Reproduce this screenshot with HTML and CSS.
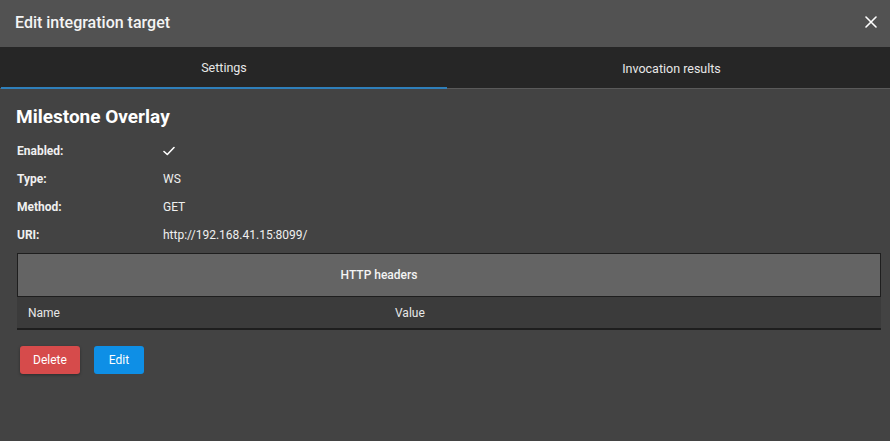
FILE: index.html
```html
<!DOCTYPE html>
<html lang="en">
<head>
    <meta charset="UTF-8">
    <meta name="viewport" content="width=device-width, initial-scale=1.0">
    <title>Edit integration target</title>
    <link rel="stylesheet" href="styles.css">
</head>
<body>
    <div class="dialog">
        <!-- Title bar -->
        <div class="dialog-header">
            <h2>Edit integration target</h2>
            <button class="close-btn" aria-label="Close">
                <svg width="12" height="12" viewBox="0 0 12 12">
                    <path d="M1 1 L11 11 M11 1 L1 11" stroke="#fff" stroke-width="1.6" stroke-linecap="round"/>
                </svg>
            </button>
        </div>

        <!-- Tabs -->
        <div class="tabs">
            <div class="tab active">Settings</div>
            <div class="tab">Invocation results</div>
        </div>

        <div class="dialog-body">
            <h3>Milestone Overlay</h3>

            <div class="props">
                <div class="prop-label">Enabled:</div>
                <div class="prop-value">
                    <svg width="12" height="10" viewBox="0 0 12 10">
                        <path d="M1 5.5 L4.3 8.5 L11 1.5" fill="none" stroke="#fff" stroke-width="1.6" stroke-linecap="round" stroke-linejoin="round"/>
                    </svg>
                </div>
                <div class="prop-label">Type:</div>
                <div class="prop-value">WS</div>
                <div class="prop-label">Method:</div>
                <div class="prop-value">GET</div>
                <div class="prop-label">URI:</div>
                <div class="prop-value">http://192.168.41.15:8099/</div>
            </div>

            <!-- Headers table -->
            <div class="headers-table">
                <div class="headers-title">HTTP headers</div>
                <div class="headers-cols">
                    <div class="col">Name</div>
                    <div class="col">Value</div>
                </div>
            </div>

            <div class="actions">
                <button class="btn btn-danger">Delete</button>
                <button class="btn btn-primary">Edit</button>
            </div>
        </div>
    </div>
</body>
</html>
```

FILE: styles.css
```css
/* Page reset */
body {
    margin: 0;
    padding: 0;
    background-color: #434343;
    font-family: 'Roboto', 'Liberation Sans', sans-serif;
    color: #ffffff;
}

.dialog {
    width: 890px;
    height: 441px;
    display: flex;
    flex-direction: column;
    background-color: #434343;
    overflow: hidden;
}

/* Header */
.dialog-header {
    height: 47px;
    background-color: #525252;
    display: flex;
    align-items: center;
    justify-content: space-between;
    padding: 0 12px 0 15px;
    box-sizing: border-box;
}

.dialog-header h2 {
    margin: 0;
    font-size: 16px;
    font-weight: 500;
    color: #f4f4f4;
    padding-bottom: 3px;
}

.close-btn {
    background: none;
    border: none;
    padding: 0;
    width: 14px;
    height: 14px;
    display: flex;
    align-items: center;
    justify-content: center;
    cursor: pointer;
    margin-bottom: 3px;
}

/* Tabs */
.tabs {
    display: grid;
    grid-template-columns: 447px 1fr;
    height: 41px;
    background-color: #262626;
    border-bottom: 1px solid #5a5a5a;
}

.tab {
    display: flex;
    align-items: center;
    justify-content: center;
    font-size: 12.5px;
    color: #e8e8e8;
    padding-top: 1px;
    box-sizing: border-box;
}

.tab + .tab {
    padding-left: 6px;
}

.tab.active {
    border-bottom: 2px solid #2f7fba;
    margin-bottom: -1px;
    margin-left: 1px;
}

/* Body */
.dialog-body {
    flex: 1;
    padding: 16px 10px 0 16px;
    border-left: 1px solid #333333;
    margin-left: -1px;
}

.dialog-body h3 {
    margin: 0 0 9px 0;
    font-size: 19px;
    font-weight: 700;
    color: #ffffff;
}

.props {
    display: grid;
    grid-template-columns: 146px 1fr;
    grid-auto-rows: 28px;
    align-items: center;
    font-size: 12px;
    margin-left: 1px;
}

.prop-label {
    font-weight: 700;
    color: #f0f0f0;
}

.prop-value {
    color: #f0f0f0;
    display: flex;
    align-items: center;
}

/* HTTP headers table */
.headers-table {
    margin-top: 4px;
    margin-left: 1px;
    width: 864px;
}

.headers-title {
    height: 42px;
    background-color: #646464;
    border: 1px solid #1e1e1e;
    display: flex;
    align-items: center;
    justify-content: center;
    padding-right: 140px;
    font-size: 12px;
    font-weight: 500;
    color: #f4f4f4;
}

.headers-cols {
    display: grid;
    grid-template-columns: 367px 1fr;
    height: 31px;
    background-color: #3b3b3b;
    border-bottom: 2px solid #1e1e1e;
    align-items: center;
    font-size: 12px;
    color: #e8e8e8;
}

.headers-cols .col {
    padding-left: 11px;
}

/* Buttons */
.actions {
    display: flex;
    gap: 14px;
    margin-top: 16px;
    margin-left: 4px;
}

.btn {
    height: 28px;
    border: none;
    border-radius: 3px;
    font-family: inherit;
    font-size: 12px;
    color: #ffffff;
    cursor: pointer;
}

.btn-danger {
    width: 60px;
    background-color: #d64b4b;
    box-shadow: 0 1px 3px rgba(0, 0, 0, 0.35);
}

.btn-primary {
    width: 50px;
    background-color: #0e8fe6;
}
```
